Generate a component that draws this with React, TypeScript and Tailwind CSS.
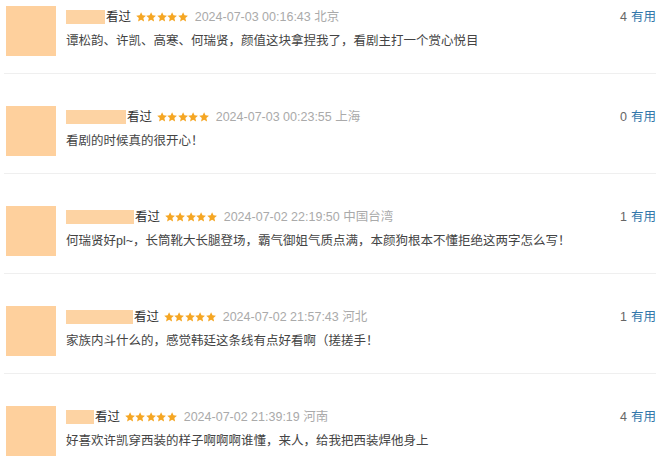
import React from 'react';

interface Review {
  nameWidth: number;
  date: string;
  location: string;
  content: string;
  useful: number;
}

const reviews: Review[] = [
  {
    nameWidth: 39,
    date: '2024-07-03 00:16:43',
    location: '北京',
    content: '谭松韵、许凯、高寒、何瑞贤，颜值这块拿捏我了，看剧主打一个赏心悦目',
    useful: 4,
  },
  {
    nameWidth: 60,
    date: '2024-07-03 00:23:55',
    location: '上海',
    content: '看剧的时候真的很开心！',
    useful: 0,
  },
  {
    nameWidth: 68,
    date: '2024-07-02 22:19:50',
    location: '中国台湾',
    content: '何瑞贤好pl~，长筒靴大长腿登场，霸气御姐气质点满，本颜狗根本不懂拒绝这两字怎么写！',
    useful: 1,
  },
  {
    nameWidth: 67,
    date: '2024-07-02 21:57:43',
    location: '河北',
    content: '家族内斗什么的，感觉韩廷这条线有点好看啊（搓搓手！',
    useful: 1,
  },
  {
    nameWidth: 28,
    date: '2024-07-02 21:39:19',
    location: '河南',
    content: '好喜欢许凯穿西装的样子啊啊啊谁懂，来人，给我把西装焊他身上',
    useful: 4,
  },
];

const Star = () => (
  <svg viewBox="1 1.5 22 21" className="w-[10.2px] h-[10px]">
    <path
      d="M12 1.5l3.1 6.9 7.4.8-5.6 5 1.6 7.4L12 17.8l-6.5 3.8 1.6-7.4-5.6-5 7.4-.8z"
      fill="#f5a623"
    />
  </svg>
);

const ReviewRow: React.FC<{ review: Review; first: boolean; last: boolean }> = ({
  review,
  first,
  last,
}) => (
  <div
    className={`flex ${first ? 'pt-[6px]' : 'pt-[32px]'} pb-[17px] ${
      last ? '' : 'border-b border-[#efefef]'
    }`}
  >
    <div className="w-[50px] h-[50px] ml-[2px] bg-[#fed09d] shrink-0" />
    <div className="flex-1 ml-[10px]">
      <div className="flex items-center h-[20px] mt-[1px]">
        <div className="h-[14px] bg-[#fdd3a3]" style={{ width: review.nameWidth }} />
        <span className="ml-[1px] text-[12.5px] text-[#333]">看过</span>
        <span className="ml-[5px] flex gap-[0.2px]">
          <Star />
          <Star />
          <Star />
          <Star />
          <Star />
        </span>
        <span className="ml-[7px] text-[12.5px] text-[#aaa]">
          {review.date} {review.location}
        </span>
        <span className="ml-auto text-[12.5px]">
          <span className="text-[#666]">{review.useful}</span>
          <span className="text-[#37a] ml-[4px]">有用</span>
        </span>
      </div>
      <p className="mt-[4px] text-[12.5px] leading-[20px] text-[#444]">{review.content}</p>
    </div>
  </div>
);

export default function App() {
  return (
    <div
      className="w-[660px] h-[466px] overflow-hidden bg-white pl-[4px] pr-[4px]"
      style={{ fontFamily: '"Liberation Sans", "Noto Sans CJK SC", sans-serif' }}
    >
      {reviews.map((r, i) => (
        <ReviewRow key={i} review={r} first={i === 0} last={i === reviews.length - 1} />
      ))}
    </div>
  );
}
